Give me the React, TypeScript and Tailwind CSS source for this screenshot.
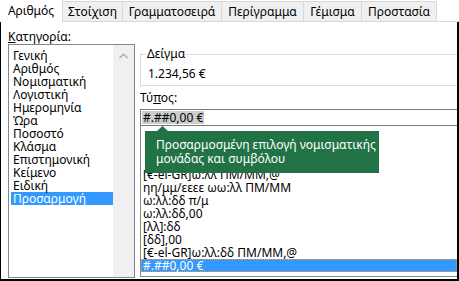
const TABS = [
  { label: "Αριθμός", w: "w-[63px]", active: true },
  { label: "Στοίχιση", w: "w-[60px]" },
  { label: "Γραμματοσειρά", w: "w-[99px]" },
  { label: "Περίγραμμα", w: "w-[82px]" },
  { label: "Γέμισμα", w: "w-[58px]" },
  { label: "Προστασία", w: "w-[75px]" },
];

const CATEGORIES = [
  "Γενική",
  "Αριθμός",
  "Νομισματική",
  "Λογιστική",
  "Ημερομηνία",
  "Ώρα",
  "Ποσοστό",
  "Κλάσμα",
  "Επιστημονική",
  "Κείμενο",
  "Ειδική",
  "Προσαρμογή",
];

// first rows sit under the tooltip, so they stay blank
const FORMATS = [
  "",
  "",
  "",
  "[€-el-GR]ω:λλ ΠΜ/ΜΜ,@",
  "ηη/μμ/εεεε ωω:λλ ΠΜ/ΜΜ",
  "ω:λλ:δδ π/μ",
  "ω:λλ:δδ,00",
  "[λλ]:δδ",
  "[δδ],00",
  "[€-el-GR]ω:λλ:δδ ΠΜ/ΜΜ,@",
  "#.##0,00 €",
];

function Tabs() {
  return (
    <div className="flex h-[22px] items-end border-b border-[#d9d9d9]">
      {TABS.map((t) =>
        t.active ? (
          <div
            key={t.label}
            className={`${t.w} -mb-px flex h-[23px] items-center justify-center border-r border-[#d9d9d9] bg-white`}>
            {t.label}
          </div>
        ) : (
          <div
            key={t.label}
            className={`${t.w} flex h-[20px] items-center justify-center border-r border-t border-[#d9d9d9] bg-[#f0f0f0] pt-px`}>
            {t.label}
          </div>
        )
      )}
    </div>
  );
}

function CategoryList() {
  return (
    <div className="flex h-[234px] border border-[#828790]">
      <div className="flex-1 pl-[2px] pt-[4px]">
        {CATEGORIES.map((c) => (
          <div
            key={c}
            className={`h-[13px] px-[2px] leading-[13px] ${
              c === "Προσαρμογή" ? "bg-[#3399ff] text-white" : ""
            }`}>
            {c}
          </div>
        ))}
      </div>
      <div className="w-[21px] bg-[#f0f0f0] pt-[8px]">
        <svg width="21" height="6" viewBox="0 0 21 6">
          <path d="M6.5 5 L10.5 1 L14.5 5" fill="none" stroke="#a6a6a6" strokeWidth="1.2" />
        </svg>
      </div>
    </div>
  );
}

export default function App() {
  return (
    <div
      className="relative h-[281px] w-[459px] overflow-hidden bg-white text-[12px] leading-[14px] text-black"
      style={{ fontFamily: '"Noto Sans", "DejaVu Sans", sans-serif' }}>
      <Tabs />
      <div className="flex h-[259px] border-b-2 border-l border-r-2 border-black">
        <div className="ml-[7px] flex w-[127px] flex-col">
          <div className="mt-[8px] h-[14px]">
            <span className="underline">Κ</span>ατηγορία:
          </div>
          <CategoryList />
        </div>

        <div className="ml-[5px] flex flex-1 flex-col">
          <fieldset className="mt-[25px] h-[39px] border border-r-0 border-[#dcdcdc]">
            <legend className="ml-[5px] px-[1px]">Δείγμα</legend>
            <div className="pl-[7px] pt-[6px]">1.234,56 €</div>
          </fieldset>

          <div className="mt-[5px] h-[14px]">
            Τύ<span className="underline">π</span>ος:
          </div>

          <div className="mt-[4px] flex h-[17px] items-center border border-r-0 border-[#7a7a7a] pl-px">
            <span className="bg-[#cdcdcd] px-px leading-[13px]">#.##0,00 €</span>
          </div>

          <div className="h-[151px] border border-r-0 border-t-0 border-[#828790] pt-[3px]">
            {FORMATS.map((f, i) =>
              i === FORMATS.length - 1 ? (
                <div
                  key={i}
                  className="h-[13px] border border-dotted border-[#f39a3c] bg-[#3399ff] pl-px leading-[11px] text-white">
                  {f}
                </div>
              ) : (
                <div key={i} className="h-[13px] pl-[2px] leading-[13px]">
                  {f}
                </div>
              )
            )}
          </div>
        </div>
      </div>

      {/* tooltip over the type list */}
      <div className="absolute left-[145px] top-[131px] h-[42px] w-[234px] whitespace-nowrap bg-[#217346] pl-[11px] pt-[7px] text-[12px] leading-[14px] text-white">
        <svg className="absolute -top-[5px] left-[12px]" width="11" height="5" viewBox="0 0 11 5">
          <path d="M0 5 L5.5 0 L11 5 Z" fill="#217346" />
        </svg>
        Προσαρμοσμένη επιλογή νομισματικής
        <br />
        μονάδας και συμβόλου
      </div>
    </div>
  );
}
